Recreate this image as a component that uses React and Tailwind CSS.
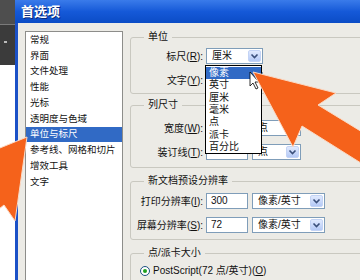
const categories = ['常规', '界面', '文件处理', '性能', '光标', '透明度与色域', '单位与标尺', '参考线、网格和切片', '增效工具', '文字']
const units = ['像素', '英寸', '厘米', '毫米', '点', '派卡', '百分比']

const Chevron = () => (
  <svg width="9" height="7" viewBox="0 0 9 7">
    <path d="M1.5 1.5 L4.5 4.5 L7.5 1.5" fill="none" stroke="#3a4f7a" strokeWidth="1.6" />
  </svg>
)

const Select = ({ value, className }) => (
  <div className={`flex h-[16px] shrink-0 items-center border border-[#7f9db9] bg-white ${className}`}>
    <span className="flex-1 truncate pl-[5px] leading-[14px]">{value}</span>
    <span className="m-[1px] flex h-[12px] w-[13px] items-center justify-center rounded-[2px] border border-[#c3d3f5] bg-gradient-to-b from-[#e1eafe] to-[#b4c9f6]">
      <Chevron />
    </span>
  </div>
)

const Input = ({ value }) => (
  <div className="h-[16px] w-[42px] shrink-0 border border-[#7f9db9] bg-white pl-[4px] leading-[14px]">{value}</div>
)

const Row = ({ label, k, children }) => (
  <div className="flex h-[24px] items-center">
    <div className="w-[72px] shrink-0 whitespace-nowrap text-right">
      {label}(<span className="underline">{k}</span>):
    </div>
    <div className="ml-[3px] flex items-center gap-[4px]">{children}</div>
  </div>
)

const Group = ({ title, className, children }) => (
  <div className={`relative w-[250px] shrink-0 rounded-[3px] border border-[#c9c8c0] ${className}`}>
    <span className="absolute -top-[7px] left-[13px] whitespace-nowrap bg-[#ecebe6] px-[4px] leading-[12px]">{title}</span>
    {children}
  </div>
)

const Arrows = () => (
  <svg className="pointer-events-none absolute left-0 top-0" width="360" height="280" viewBox="0 0 360 280">
    <path d="M10 4 L10 18 L13 15 L16 21 L18 20 L15 14 L19 14 Z" transform="translate(240 68)" fill="#fff" stroke="#000" strokeWidth="0.8" />
    <polygon
      points="253,72 336,93 318,105 372,138 372,170 302,126 293,147"
      fill="#f5621b"
      stroke="#fbd9c4"
      strokeWidth="1"
      strokeLinejoin="round"
    />
    <polygon
      points="27,137 15,221 4,205 -10,216 -10,152"
      fill="#f5621b"
      stroke="#fbd9c4"
      strokeWidth="1"
      strokeLinejoin="round"
    />
  </svg>
)

export default function App() {
  return (
    <div className="relative flex h-[280px] w-[360px] overflow-hidden font-['Liberation_Sans','Noto_Sans_CJK_SC',sans-serif] text-[10px] text-[#111]">
      {/* photoshop behind the dialog */}
      <div className="flex w-[15px] shrink-0 flex-col">
        <div className="h-[24px] bg-[#4e4e4e]" />
        <div className="h-[1px] bg-[#7a7a7a]" />
        <div className="relative h-[40px] bg-[#3b3b3b]">
          <span className="absolute left-[4px] top-[16px] h-[2px] w-[3px] bg-[#bbb]" />
        </div>
        <div className="flex-1 bg-white" />
      </div>

      <div className="flex min-w-0 flex-1 flex-col">
        <div className="flex h-[23px] shrink-0 items-center bg-gradient-to-b from-[#3a7bea] via-[#1559d8] to-[#0b4cc6] pl-[6px] text-[13px] font-bold text-white [text-shadow:1px_1px_0_#0a2a7a]">
          首选项
        </div>

        <div className="flex flex-1 items-start border-l-[3px] border-[#1b51c7] bg-[#ecebe6]">
          <div className="ml-[7px] mt-[8px] h-[260px] w-[98px] shrink-0 border border-[#8d8d8a] bg-white text-[9.5px]">
            {categories.map((c) => (
              <div
                key={c}
                className={`flex h-[15.75px] items-center whitespace-nowrap pl-[4px] ${
                  c === '单位与标尺' ? 'bg-[#316ac5] text-white' : ''
                }`}
              >
                {c}
              </div>
            ))}
          </div>

          <div className="ml-[7px] flex shrink-0 flex-col">
            <Group title="单位" className="mt-[14px] h-[57px] pt-[6px]">
              <Row label="标尺" k="R">
                <Select value="厘米" className="w-[57px]" />
              </Row>
              <Row label="文字" k="Y">
                <Select value="" className="w-[57px]" />
              </Row>
            </Group>

            <Group title="列尺寸" className="mt-[11px] h-[63px] pt-[10px]">
              <Row label="宽度" k="W">
                <Input value="" />
                <Select value="点" className="w-[49px]" />
              </Row>
              <Row label="装订线" k="T">
                <Input value="" />
                <Select value="点" className="w-[49px]" />
              </Row>
            </Group>

            <Group title="新文档预设分辨率" className="mt-[13px] h-[59px] pt-[7px]">
              <Row label="打印分辨率" k="I">
                <Input value="300" />
                <Select value="像素/英寸" className="w-[73px]" />
              </Row>
              <Row label="屏幕分辨率" k="S">
                <Input value="72" />
                <Select value="像素/英寸" className="w-[73px]" />
              </Row>
            </Group>

            <Group title="点/派卡大小" className="mt-[13px] h-[40px] pt-[9px]">
              <div className="flex items-center pl-[9px]">
                <span className="flex h-[10px] w-[10px] items-center justify-center rounded-full border border-[#1c5180] bg-white">
                  <span className="h-[4px] w-[4px] rounded-full bg-[#21a121]" />
                </span>
                <span className="ml-[3px] whitespace-nowrap">
                  PostScript(72 点/英寸)(<span className="underline">O</span>)
                </span>
              </div>
            </Group>
          </div>
        </div>
      </div>

      {/* open dropdown list */}
      <div className="absolute left-[205px] top-[65px] w-[57px] border border-[#000] bg-white py-[0.5px]">
        {units.map((u) => (
          <div
            key={u}
            className={`flex h-[12.3px] items-center pl-[3px] ${u === '像素' ? 'bg-[#316ac5] text-white' : ''}`}
          >
            {u}
          </div>
        ))}
      </div>

      <Arrows />
    </div>
  )
}
